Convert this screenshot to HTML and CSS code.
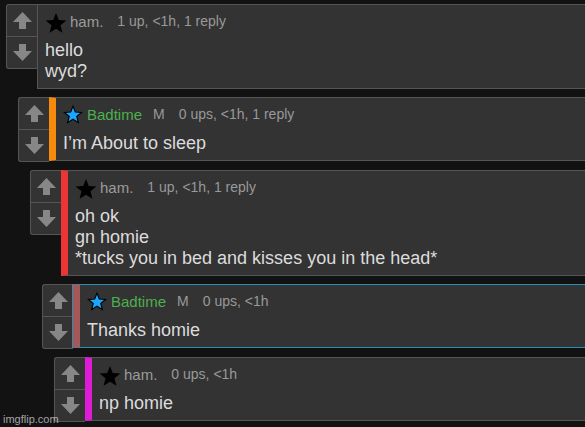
FILE: index.html
```html
<!DOCTYPE html>
<html>
<head>
<meta charset="utf-8">
<link rel="stylesheet" href="styles.css">
</head>
<body>
<div class="thread">
  <div class="comment d0">
    <div class="vote">
      <div class="vbtn"><svg class="arrow" viewBox="0 0 19 17"><path d="M9.5 0 L19 10 L13 10 L13 17 L6 17 L6 10 L0 10 Z"/></svg></div>
      <div class="vbtn"><svg class="arrow" viewBox="0 0 19 17"><path d="M9.5 17 L19 7 L13 7 L13 0 L6 0 L6 7 L0 7 Z"/></svg></div>
    </div>
    <div class="box">
      <div class="meta">
        <svg class="star black" viewBox="0 0 24 22"><polygon points="12,0 15.06,7.79 23.41,8.29 16.95,13.61 19.05,21.71 12,17.2 4.95,21.71 7.05,13.61 0.59,8.29 8.94,7.79"/></svg>
        <span class="name">ham.</span>
        <span>1 up, &lt;1h, 1 reply</span>
      </div>
      <div class="text">hello<br>wyd?</div>
    </div>
  </div>

  <div class="comment d1">
    <div class="vote">
      <div class="vbtn"><svg class="arrow" viewBox="0 0 19 17"><path d="M9.5 0 L19 10 L13 10 L13 17 L6 17 L6 10 L0 10 Z"/></svg></div>
      <div class="vbtn"><svg class="arrow" viewBox="0 0 19 17"><path d="M9.5 17 L19 7 L13 7 L13 0 L6 0 L6 7 L0 7 Z"/></svg></div>
    </div>
    <div class="box bar orange">
      <div class="meta">
        <svg class="star blue" viewBox="-1.2 -1.2 26.4 24.4"><polygon points="12,0 15.06,7.79 23.41,8.29 16.95,13.61 19.05,21.71 12,17.2 4.95,21.71 7.05,13.61 0.59,8.29 8.94,7.79"/></svg>
        <span class="name mod">Badtime</span>
        <span class="badge">M</span>
        <span>0 ups, &lt;1h, 1 reply</span>
      </div>
      <div class="text">I’m About to sleep</div>
    </div>
  </div>

  <div class="comment d2">
    <div class="vote">
      <div class="vbtn"><svg class="arrow" viewBox="0 0 19 17"><path d="M9.5 0 L19 10 L13 10 L13 17 L6 17 L6 10 L0 10 Z"/></svg></div>
      <div class="vbtn"><svg class="arrow" viewBox="0 0 19 17"><path d="M9.5 17 L19 7 L13 7 L13 0 L6 0 L6 7 L0 7 Z"/></svg></div>
    </div>
    <div class="box bar red">
      <div class="meta">
        <svg class="star black" viewBox="0 0 24 22"><polygon points="12,0 15.06,7.79 23.41,8.29 16.95,13.61 19.05,21.71 12,17.2 4.95,21.71 7.05,13.61 0.59,8.29 8.94,7.79"/></svg>
        <span class="name">ham.</span>
        <span>1 up, &lt;1h, 1 reply</span>
      </div>
      <div class="text">oh ok<br>gn homie<br>*tucks you in bed and kisses you in the head*</div>
    </div>
  </div>

  <div class="comment d3">
    <div class="vote">
      <div class="vbtn"><svg class="arrow" viewBox="0 0 19 17"><path d="M9.5 0 L19 10 L13 10 L13 17 L6 17 L6 10 L0 10 Z"/></svg></div>
      <div class="vbtn"><svg class="arrow" viewBox="0 0 19 17"><path d="M9.5 17 L19 7 L13 7 L13 0 L6 0 L6 7 L0 7 Z"/></svg></div>
    </div>
    <div class="box bar rose highlight">
      <div class="meta">
        <svg class="star blue" viewBox="-1.2 -1.2 26.4 24.4"><polygon points="12,0 15.06,7.79 23.41,8.29 16.95,13.61 19.05,21.71 12,17.2 4.95,21.71 7.05,13.61 0.59,8.29 8.94,7.79"/></svg>
        <span class="name mod">Badtime</span>
        <span class="badge">M</span>
        <span>0 ups, &lt;1h</span>
      </div>
      <div class="text">Thanks homie</div>
    </div>
  </div>

  <div class="comment d4">
    <div class="vote">
      <div class="vbtn"><svg class="arrow" viewBox="0 0 19 17"><path d="M9.5 0 L19 10 L13 10 L13 17 L6 17 L6 10 L0 10 Z"/></svg></div>
      <div class="vbtn"><svg class="arrow" viewBox="0 0 19 17"><path d="M9.5 17 L19 7 L13 7 L13 0 L6 0 L6 7 L0 7 Z"/></svg></div>
    </div>
    <div class="box bar magenta">
      <div class="meta">
        <svg class="star black" viewBox="0 0 24 22"><polygon points="12,0 15.06,7.79 23.41,8.29 16.95,13.61 19.05,21.71 12,17.2 4.95,21.71 7.05,13.61 0.59,8.29 8.94,7.79"/></svg>
        <span class="name">ham.</span>
        <span>0 ups, &lt;1h</span>
      </div>
      <div class="text">np homie</div>
    </div>
  </div>
</div>
<div class="watermark">imgflip.com</div>
</body>
</html>
```
FILE: styles.css
```css
html, body {
  margin: 0;
  height: 100%;
}
body {
  background: #121212;
  font-family: "Liberation Sans", Arial, sans-serif;
  overflow: hidden;
  position: relative;
}
.thread {
  padding-top: 4px;
  display: flex;
  flex-direction: column;
  gap: 8px;
}
.comment {
  display: flex;
  align-items: flex-start;
  margin-right: -20px;
}
.d0 { margin-left: 6px; }
.d1 { margin-left: 18px; }
.d2 { margin-left: 30px; }
.d3 { margin-left: 42px; }
.d4 { margin-left: 54px; }

.vote {
  width: 30px;
  flex: none;
  background: #333;
  border: 1px solid #555;
  border-right: none;
  border-radius: 3px 0 0 3px;
  display: flex;
  flex-direction: column;
}
.vbtn {
  height: 31px;
  display: flex;
  align-items: center;
  justify-content: center;
}
.vbtn + .vbtn {
  border-top: 1px solid #555;
}
.arrow {
  width: 19px;
  height: 17px;
  fill: #878787;
}

.box {
  flex: 1;
  min-width: 0;
  background: #333;
  border: 1px solid #555;
  padding: 5px 8px 6px 7px;
}
.box.bar {
  border-left-width: 7px;
  padding-left: 7px;
}
.orange { border-left-color: #f7890c; }
.red { border-left-color: #ee3535; }
.rose { border-left-color: #a65858; }
.magenta { border-left-color: #e01bd8; }
.box.highlight {
  border-top-color: #2b8fb5;
  border-right-color: #2b8fb5;
  border-bottom-color: #2b8fb5;
  box-shadow: -1px 0 0 #2b8fb5;
}

.meta {
  height: 22px;
  display: flex;
  align-items: center;
  font-size: 14px;
  color: #999;
  white-space: nowrap;
}
.star {
  flex: none;
}
.star.black {
  width: 22px;
  height: 20px;
  fill: #000;
  margin-top: 4px;
  margin-right: 3px;
}
.star.blue {
  width: 20px;
  height: 19px;
  fill: #1aa6ff;
  stroke: #000;
  stroke-width: 1.5;
  stroke-linejoin: miter;
  margin-right: 4px;
}
.name {
  font-size: 15px;
  margin-right: 14px;
  color: #9c9c9c;
}
.name.mod {
  color: #4cb04c;
  margin-right: 11px;
}
.badge {
  margin-right: 14px;
}
.text {
  margin-top: 8px;
  font-size: 18px;
  line-height: 21px;
  color: #dcdcdc;
  white-space: nowrap;
}
.watermark {
  position: absolute;
  left: 3px;
  bottom: 2px;
  font-size: 11px;
  color: rgba(255, 255, 255, 0.62);
}
```
